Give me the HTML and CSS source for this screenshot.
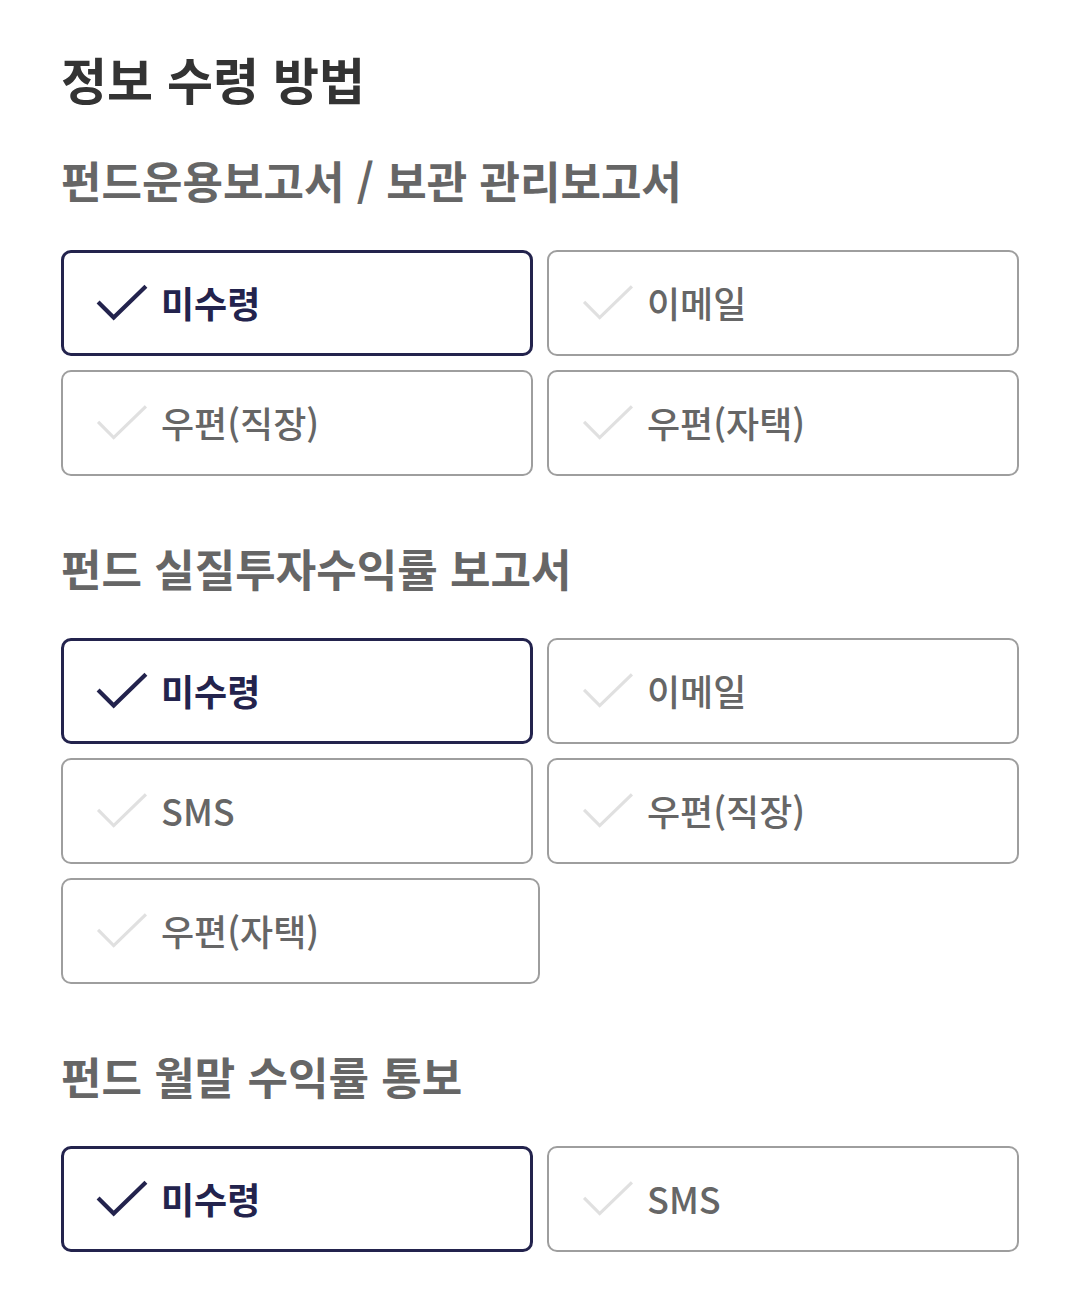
FILE: index.html
```html
<!DOCTYPE html>
<html lang="ko">
<head>
    <meta charset="UTF-8">
    <meta name="viewport" content="width=device-width, initial-scale=1.0">
    <title>정보 수령 방법</title>
    <link rel="stylesheet" href="styles.css">
</head>
<body>
    <div class="container">
        <h1>정보 수령 방법</h1>

        <section class="group">
            <h2>펀드운용보고서 / 보관 관리보고서</h2>
            <div class="options">
                <button class="option selected"><svg class="check" viewBox="0 0 50 36"><path d="M2 17 L17 32 L48 2"/></svg><span>미수령</span></button>
                <button class="option"><svg class="check" viewBox="0 0 50 36"><path d="M2 17 L17 32 L48 2"/></svg><span>이메일</span></button>
                <button class="option"><svg class="check" viewBox="0 0 50 36"><path d="M2 17 L17 32 L48 2"/></svg><span>우편(직장)</span></button>
                <button class="option"><svg class="check" viewBox="0 0 50 36"><path d="M2 17 L17 32 L48 2"/></svg><span>우편(자택)</span></button>
            </div>
        </section>

        <section class="group">
            <h2>펀드 실질투자수익률 보고서</h2>
            <div class="options">
                <button class="option selected"><svg class="check" viewBox="0 0 50 36"><path d="M2 17 L17 32 L48 2"/></svg><span>미수령</span></button>
                <button class="option"><svg class="check" viewBox="0 0 50 36"><path d="M2 17 L17 32 L48 2"/></svg><span>이메일</span></button>
                <button class="option"><svg class="check" viewBox="0 0 50 36"><path d="M2 17 L17 32 L48 2"/></svg><span>SMS</span></button>
                <button class="option"><svg class="check" viewBox="0 0 50 36"><path d="M2 17 L17 32 L48 2"/></svg><span>우편(직장)</span></button>
                <button class="option single"><svg class="check" viewBox="0 0 50 36"><path d="M2 17 L17 32 L48 2"/></svg><span>우편(자택)</span></button>
            </div>
        </section>

        <section class="group">
            <h2>펀드 월말 수익률 통보</h2>
            <div class="options">
                <button class="option selected"><svg class="check" viewBox="0 0 50 36"><path d="M2 17 L17 32 L48 2"/></svg><span>미수령</span></button>
                <button class="option"><svg class="check" viewBox="0 0 50 36"><path d="M2 17 L17 32 L48 2"/></svg><span>SMS</span></button>
            </div>
        </section>
    </div>
</body>
</html>
```

FILE: styles.css
```css
body {
    margin: 0;
    font-family: "Noto Sans CJK KR", "Noto Sans", sans-serif;
    background-color: #fff;
    color: #333;
}

.container {
    padding: 40px 61px 40px 61px;
}

h1 {
    margin: 0;
    font-size: 50px;
    font-weight: 700;
    line-height: 76px;
    color: #333;
}

.group h2 {
    margin: 0;
    font-size: 44px;
    font-weight: 700;
    line-height: 60px;
    color: #666;
}

.group {
    margin-top: 34px;
}

.group + .group {
    margin-top: 62px;
}

.options {
    display: flex;
    flex-wrap: wrap;
    gap: 14px;
    margin-top: 40px;
}

.option {
    box-sizing: border-box;
    width: calc(50% - 7px);
    height: 106px;
    display: flex;
    align-items: center;
    gap: 13px;
    padding: 0 0 0 33px;
    background: #fff;
    border: 2px solid #9e9e9e;
    border-radius: 10px;
    font-family: inherit;
    font-size: 36px;
    font-weight: 500;
    color: #666;
    cursor: pointer;
}

.option.single {
    width: 50%;
}

.option span {
    line-height: 1;
    margin-top: -2px;
}

.check {
    width: 52px;
    height: 38px;
    fill: none;
    stroke: #e0e0e0;
    stroke-width: 3;
}

.option.selected {
    border: 3px solid #23234d;
    padding-left: 32px;
    color: #23234d;
    font-weight: 700;
}

.option.selected .check {
    stroke: #23234d;
    stroke-width: 4;
}
```
